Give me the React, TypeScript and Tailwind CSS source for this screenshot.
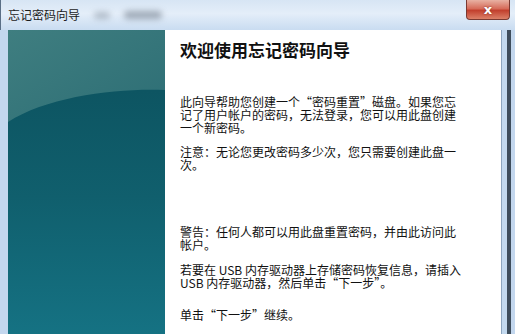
import React from "react";

const cjk = "font-['SimSun','Noto_Sans_CJK_SC',sans-serif]";

function TealPanel() {
  return (
    <div className="relative w-[157px] h-full bg-[linear-gradient(180deg,#0d5562_20%,#105f6d_55%,#157283_100%)] overflow-hidden">
      <svg className="absolute inset-0" width="157" height="304" viewBox="0 0 157 304">
        <defs>
          <linearGradient id="top" x1="0" y1="0" x2="1" y2="1">
            <stop offset="0" stopColor="#3f7e80" />
            <stop offset="1" stopColor="#2d6e75" />
          </linearGradient>
        </defs>
        <path d="M0 0 H157 V60 C110 58 40 66 0 92 Z" fill="url(#top)" />
      </svg>
    </div>
  );
}

export default function App() {
  return (
    <div className={`w-[515px] h-[334px] flex flex-col bg-[#c3d7ee] overflow-hidden ${cjk}`}>
      {/* title bar */}
      <div className="h-[30px] flex items-start justify-between bg-[linear-gradient(180deg,#d7e5f4_0%,#e4eef9_45%,#c9dcf1_100%)] border-l border-[#5a6f86]">
        <div className="flex items-center h-[30px] gap-[14px]">
          <span className="pl-[7px] text-[12px] text-[#1b1b1b] leading-none">忘记密码向导</span>
          <span className="w-[16px] h-[7px] rounded-full bg-[#9aa6b4] blur-[3px] opacity-70" />
          <span className="w-[38px] h-[8px] rounded-full bg-[#7f8b99] blur-[3px] opacity-70" />
        </div>
        <div className="flex pr-[5px]">
          <div className="w-[44px] h-[20px] rounded-b-[4px] border border-t-0 border-[#7a3a32] bg-[linear-gradient(180deg,#e8b1a3_0%,#d66c5a_45%,#c2402e_55%,#dc8068_100%)] flex items-center justify-center">
            <span className="font-['DejaVu_Sans',sans-serif] font-bold text-[13px] leading-none text-white [text-shadow:0_0_2px_#7a2a20]">x</span>
          </div>
        </div>
      </div>

      {/* body */}
      <div className="flex-1 flex pl-[8px] pr-[4px] bg-[#c3d7ee]">
        <div className="flex-1 flex min-h-0">
          <TealPanel />
          <div className="flex-1 bg-white pl-[15px] pt-[10px] text-[#111] border-r border-[#8ea6c0]">
            <div className="text-[17px] font-bold leading-[20px]">欢迎使用忘记密码向导</div>
            <div className="mt-[35px] text-[12px] leading-[13px]">
              <p>此向导帮助您创建一个“密码重置”磁盘。如果您忘<br />记了用户帐户的密码，无法登录，您可以用此盘创建<br />一个新密码。</p>
              <p className="mt-[11px]">注意：无论您更改密码多少次，您只需要创建此盘一<br />次。</p>
              <p className="mt-[54px]">警告：任何人都可以用此盘重置密码，并由此访问此<br />帐户。</p>
              <p className="mt-[12px]">若要在 USB 内存驱动器上存储密码恢复信息，请插入<br />USB 内存驱动器，然后单击“下一步”。</p>
              <p className="mt-[19px]">单击“下一步”继续。</p>
            </div>
          </div>
        </div>
        <div className="w-[5px] bg-[#c3d9ef]" />
        <div className="w-[4px] bg-[#3e4d5c]" />
      </div>
    </div>
  );
}
